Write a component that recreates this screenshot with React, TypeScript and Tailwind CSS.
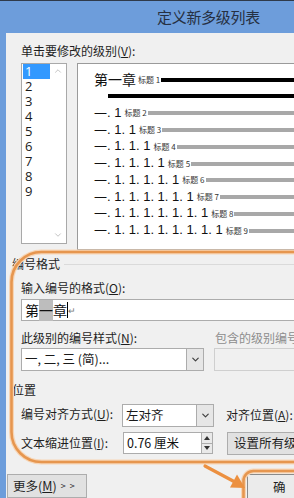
import React from "react";
import { ChevronDown, ChevronUp } from "lucide-react";

const cjk = "font-['Noto_Sans_CJK_SC','Noto_Sans',sans-serif]";

function Dropdown({ w, text, btn }: { w: string; text: string; btn: string }) {
  return (
    <div className={`flex h-full ${w} border border-[#acacac] bg-white`}>
      <div className="flex-1 flex items-center pl-[3px] text-[12.5px] text-[#1a1a1a] whitespace-pre overflow-hidden">
        {text}
      </div>
      <div className={`${btn} flex items-center justify-center border-l border-[#acacac] bg-[#e6e6e6]`}>
        <ChevronDown size={11} strokeWidth={2.6} color="#404040" />
      </div>
    </div>
  );
}

export default function App() {
  const levels = [2, 3, 4, 5, 6, 7, 8, 9];
  return (
    <div className={`relative w-[294px] h-[498px] overflow-hidden bg-[#6d9ddb] ${cjk} text-[12px] text-[#1e1e1e]`}>
      <div className="h-[33px] border-t border-[#2f3a4a] flex items-center pl-[157px] text-[15px] text-[#263042] tracking-[-0.3px]">
        定义新多级列表
      </div>
      <div className="ml-[6px] w-[420px] h-[465px] bg-[#f0f0f0] flex flex-col">
        <div className="mt-[10px] h-[16px] leading-[16px] pl-[15px]">
          单击要修改的级别(<u>V</u>):
        </div>
        <div className="mt-[4px] flex items-start">
          <div className="ml-[15px] w-[46px] h-[181px] border border-[#a9a9a9] bg-white flex">
            <div className="w-[28px] flex flex-col font-['Open_Sans',sans-serif] text-[13px]">
              {[1, 2, 3, 4, 5, 6, 7, 8, 9].map((n) => (
                <div
                  key={n}
                  className={`h-[15px] ml-[1px] pl-[2px] flex items-center ${n === 1 ? "bg-[#3399ff] text-white" : "text-[#1a1a1a]"}`}
                >
                  <span className="leading-none">{n}</span>
                </div>
              ))}
            </div>
            <div className="flex-1 flex flex-col items-center justify-between pt-[2px] pb-[3px]">
              <ChevronUp size={10} strokeWidth={2} color="#b8b8b8" />
              <ChevronDown size={10} strokeWidth={2} color="#b8b8b8" />
            </div>
          </div>
          <div className="ml-[10px] w-[300px] h-[187px] border border-[#9a9a9a] bg-white pt-[6px] pl-[16px] flex flex-col">
            <div className="h-[17px] flex items-center">
              <span className="text-[14px] text-[#111] leading-none">第一章</span>
              <span className="ml-[2px] text-[8px] text-[#333] leading-none mt-[3px] whitespace-pre">标题 1</span>
              <div className="ml-[1px] mt-[3px] h-[4px] flex-1 bg-black" />
            </div>
            <div className="h-[17px] flex items-center">
              <div className="ml-[14px] h-[4px] flex-1 bg-black" />
            </div>
            {levels.map((lv) => (
              <div key={lv} className="h-[16.75px] flex items-center">
                <span className="text-[13px] text-[#111] leading-none">一</span>
                <span className="font-['Liberation_Sans',sans-serif] text-[13px] text-[#111] leading-none whitespace-pre">
                  {Array(lv - 1).fill(". 1").join("")}
                </span>
                <span className="ml-[3px] text-[8px] text-[#333] leading-none mt-[2px] whitespace-pre">{`标题 ${lv}`}</span>
                <div className="ml-[1px] mt-[2px] h-[4px] flex-1 bg-[#a8a8a8]" />
              </div>
            ))}
          </div>
        </div>

        <div className="mt-[6px] h-[16px] flex items-center pl-[6px]">
          <span>编号格式</span>
          <div className="ml-[4px] flex-1 h-px bg-[#dadada]" />
        </div>
        <div className="mt-[8px] h-[16px] leading-[16px] pl-[15px]">
          输入编号的格式(<u>O</u>):
        </div>
        <div className="mt-[3px] ml-[15px] w-[320px] h-[22px] border border-[#acacac] bg-white flex items-center pl-[3px] text-[14px] text-[#111]">
          <span>第</span>
          <span className="bg-[#bdbdbd]">一</span>
          <span>章</span>
          <span className="w-px h-[16px] bg-black" />
          <span className="text-[9px] text-[#777] mt-[2px]">↵</span>
        </div>
        <div className="mt-[9px] h-[16px] leading-[16px] pl-[15px] flex">
          <span className="w-[194px]">
            此级别的编号样式(<u>N</u>):
          </span>
          <span className="text-[#8d8d8d]">包含的级别编号来自(<u>D</u>):</span>
        </div>
        <div className="mt-[2px] ml-[15px] h-[24px] flex">
          <Dropdown w="w-[183px]" text="一, 二, 三 (简)..." btn="w-[17px]" />
          <div className="ml-[10px] w-[120px] h-full border border-[#cfcfcf] bg-[#f0f0f0]" />
        </div>

        <div className="mt-[11px] h-[16px] leading-[16px] pl-[6px]">位置</div>
        <div className="mt-[6px] h-[24px] pl-[15px] flex items-center">
          <span className="w-[101px] -mt-[4px]">
            编号对齐方式(<u>U</u>):
          </span>
          <Dropdown w="w-[92px]" text="左对齐" btn="w-[17px]" />
          <span className="ml-[12px] -mt-[1px]">
            对齐位置(<u>A</u>):
          </span>
        </div>
        <div className="mt-[5px] h-[22px] pl-[15px] flex items-center">
          <span className="w-[102px]">
            文本缩进位置(<u>I</u>):
          </span>
          <div className="w-[90px] h-full border border-[#acacac] bg-white flex">
            <div className="flex-1 flex items-center pl-[3px] text-[12.5px] text-[#111]">0.76 厘米</div>
            <div className="w-[11px] flex flex-col border-l border-[#acacac] bg-[#e9e9e9]">
              <div className="flex-1 flex items-center justify-center border-b border-[#acacac]">
                <svg width="6" height="4" viewBox="0 0 6 4">
                  <path d="M0 4 L3 0 L6 4 Z" fill="#333" />
                </svg>
              </div>
              <div className="flex-1 flex items-center justify-center">
                <svg width="6" height="4" viewBox="0 0 6 4">
                  <path d="M0 0 L6 0 L3 4 Z" fill="#333" />
                </svg>
              </div>
            </div>
          </div>
          <div className="ml-[14px] w-[120px] h-[23px] border border-[#adadad] bg-[#e1e1e1] flex items-center pl-[6px] text-[12.5px]">
            设置所有级别(<u>E</u>)...
          </div>
        </div>

        <div className="mt-[20px] h-[24px] flex">
          <div className="ml-[1px] w-[80px] h-full border border-[#adadad] bg-[#e1e1e1] flex items-center pl-[5px] text-[12.5px]">
            更多(<u>M</u>)<span className="ml-[4px] text-[9px] tracking-[1px]">{"> >"}</span>
          </div>
          <div className="ml-[160px] w-[75px] h-[26px] border border-[#8a8a8a] bg-[#ebebeb] flex items-center pl-[25px] text-[12.5px]">
            确
          </div>
        </div>
      </div>

      <svg className="absolute inset-0 pointer-events-none" width="294" height="498" viewBox="0 0 294 498">
        <rect x="11.5" y="252" width="330" height="210" rx="30" fill="none" stroke="#f7d5b5" strokeWidth="5" />
        <rect x="11.5" y="252" width="330" height="210" rx="30" fill="none" stroke="#e6964f" strokeWidth="2.6" />
        <rect x="243.5" y="471" width="90" height="60" rx="10" fill="none" stroke="#f7d5b5" strokeWidth="5" />
        <rect x="243.5" y="471" width="90" height="60" rx="10" fill="none" stroke="#e6964f" strokeWidth="2.6" />
        <line x1="205" y1="466" x2="234" y2="481.5" stroke="#ec9040" strokeWidth="3.2" strokeLinecap="round" />
        <path d="M245 488 L230 487.5 L237 474.5 Z" fill="#ec9040" />
      </svg>
    </div>
  );
}
